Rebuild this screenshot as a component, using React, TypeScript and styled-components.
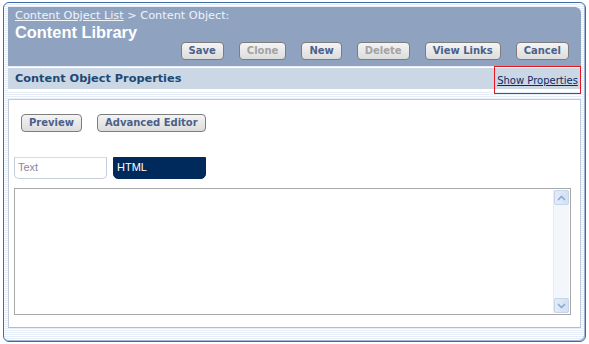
import React from "react";
import styled, { createGlobalStyle } from "styled-components";

const Global = createGlobalStyle`
  html, body { margin: 0; padding: 0; background: #ffffff; }
  body { font-family: "DejaVu Sans", Verdana, sans-serif; }
`;

const Page = styled.div`
  width: 589px;
  height: 344px;
  box-sizing: border-box;
  padding: 2px 3px 2px 3px;
  background: #ffffff;
`;

const Frame = styled.div`
  height: 100%;
  box-sizing: border-box;
  border: 1px solid #3f6da8;
  border-radius: 6px;
  box-shadow: inset -1px -1px 0 #9fb6d6;
  padding: 4px 4px 0 4px;
  background: repeating-linear-gradient(
    to bottom,
    #ffffff 0px,
    #ffffff 1px,
    #e7edf6 1px,
    #e7edf6 2px
  );
  display: flex;
  flex-direction: column;
`;

const Header = styled.div`
  background: #8fa3c1;
  height: 59px;
  box-sizing: border-box;
  border-top-right-radius: 6px;
  padding: 2px 0 0 7px;
  display: flex;
  flex-direction: column;
`;

const Crumbs = styled.div`
  font-size: 11.3px;
  color: #f0f3f8;
  line-height: 14px;
`;

const CrumbLink = styled.a`
  color: #f0f3f8;
  text-decoration: underline;
`;

const Title = styled.div`
  font-family: "Liberation Sans", Arial, sans-serif;
  font-weight: bold;
  font-size: 16.4px;
  line-height: 18px;
  color: #ffffff;
`;

const Toolbar = styled.div`
  display: flex;
  justify-content: flex-end;
  gap: 15px;
  padding-right: 12px;
  margin-top: 1px;
`;

const Button = styled.button<{ $disabled?: boolean }>`
  height: 18px;
  box-sizing: border-box;
  padding: 0 7px;
  border: 1px solid #7d7d7d;
  border-radius: 4px;
  background: linear-gradient(#f4f4f4, #dcdcdc);
  font-family: "DejaVu Sans", Verdana, sans-serif;
  font-weight: bold;
  font-size: 10px;
  line-height: 16px;
  color: ${(p) => (p.$disabled ? "#a3a3a3" : "#4a6189")};
  cursor: default;
`;

const SectionBar = styled.div`
  margin-top: 2px;
  height: 21px;
  background: #ccd7e6;
  border-bottom: 2px solid #ffffff;
  display: flex;
  align-items: center;
  justify-content: space-between;
  padding-left: 7px;
  position: relative;
`;

const SectionTitle = styled.div`
  font-weight: bold;
  font-size: 11.3px;
  color: #1c4a72;
`;

const ShowProps = styled.a`
  position: absolute;
  right: 0;
  top: -2px;
  width: 87px;
  height: 28px;
  box-sizing: border-box;
  border: 1px solid #e8141c;
  display: flex;
  align-items: center;
  justify-content: center;
  font-size: 10px;
  color: #0b2a66;
  text-decoration: underline;
`;

const Content = styled.div`
  margin-top: 8px;
  height: 229px;
  box-sizing: border-box;
  background: #ffffff;
  border: 1px solid #c2cad6;
  border-bottom-color: #b5bdc9;
  padding: 14px 9px 0 5px;
  display: flex;
  flex-direction: column;
`;

const EditorButtons = styled.div`
  display: flex;
  gap: 15px;
  padding-left: 7px;
`;

const Tabs = styled.div`
  display: flex;
  gap: 6px;
  margin-top: 25px;
`;

const Tab = styled.div<{ $active?: boolean }>`
  width: 93px;
  height: 22px;
  box-sizing: border-box;
  border: 1px solid ${(p) => (p.$active ? "#002a5c" : "#c5cdd8")};
  border-top-color: ${(p) => (p.$active ? "#002a5c" : "#d6dce5")};
  border-radius: 0 0 5px 5px;
  background: ${(p) => (p.$active ? "#002a5c" : "#ffffff")};
  color: ${(p) => (p.$active ? "#ffffff" : "#8a8a9a")};
  font-family: "Liberation Sans", Arial, sans-serif;
  font-size: 11px;
  padding: 3px 0 0 3px;
`;

const EditorBox = styled.div`
  margin-top: 9px;
  height: 127px;
  box-sizing: border-box;
  border: 1px solid #a8a8a8;
  display: flex;
  justify-content: flex-end;
  padding: 1px;
`;

const ScrollBar = styled.div`
  width: 15px;
  background: #f3f6fb;
  display: flex;
  flex-direction: column;
  justify-content: space-between;
  border-left: 1px solid #e4ebf5;
`;

const ScrollBtn = styled.div`
  height: 15px;
  box-sizing: border-box;
  border: 1px solid #c5d5ec;
  border-radius: 2px;
  background: linear-gradient(to right, #e2ebf8, #d3e0f3);
  display: flex;
  align-items: center;
  justify-content: center;
`;

const Arrow = ({ up }: { up?: boolean }) => (
  <svg width="9" height="6" viewBox="0 0 9 6">
    <path
      d={up ? "M1 5 L4.5 1.5 L8 5" : "M1 1 L4.5 4.5 L8 1"}
      fill="none"
      stroke="#8fa9cf"
      strokeWidth="1.6"
    />
  </svg>
);

export default function App() {
  return (
    <>
      <Global />
      <Page>
        <Frame>
          <Header>
            <Crumbs>
              <CrumbLink>Content Object List</CrumbLink> &gt; Content Object:
            </Crumbs>
            <Title>Content Library</Title>
            <Toolbar>
              <Button>Save</Button>
              <Button $disabled>Clone</Button>
              <Button>New</Button>
              <Button $disabled>Delete</Button>
              <Button>View Links</Button>
              <Button>Cancel</Button>
            </Toolbar>
          </Header>
          <SectionBar>
            <SectionTitle>Content Object Properties</SectionTitle>
            <ShowProps>Show Properties</ShowProps>
          </SectionBar>
          <Content>
            <EditorButtons>
              <Button>Preview</Button>
              <Button>Advanced Editor</Button>
            </EditorButtons>
            <Tabs>
              <Tab>Text</Tab>
              <Tab $active>HTML</Tab>
            </Tabs>
            <EditorBox>
              <ScrollBar>
                <ScrollBtn>
                  <Arrow up />
                </ScrollBtn>
                <ScrollBtn>
                  <Arrow />
                </ScrollBtn>
              </ScrollBar>
            </EditorBox>
          </Content>
        </Frame>
      </Page>
    </>
  );
}
